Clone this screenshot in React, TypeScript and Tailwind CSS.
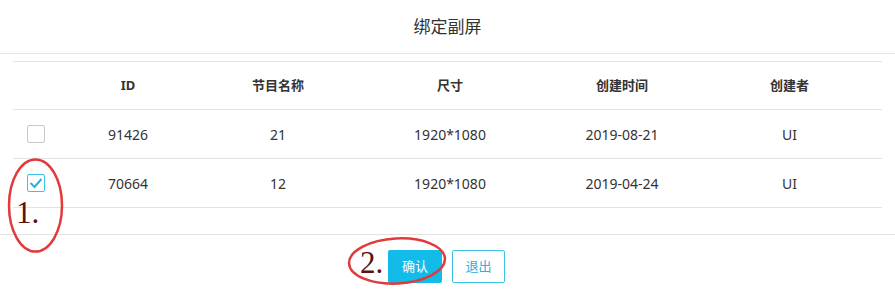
import React from 'react';

const cols = 'grid grid-cols-[42px_146px_154px_190px_154px_181px] items-center';

const rows = [
  { id: '91426', name: '21', size: '1920*1080', date: '2019-08-21', author: 'UI', checked: false },
  { id: '70664', name: '12', size: '1920*1080', date: '2019-04-24', author: 'UI', checked: true },
];

function Check({ on }: { on: boolean }) {
  if (!on) {
    return <div className="w-[18px] h-[18px] rounded-[2px] border border-[#c9c9c9] bg-white" />;
  }
  return (
    <div className="w-[18px] h-[18px] rounded-[2px] border border-[#3cc3e6] bg-white flex items-center justify-center">
      <svg width="14" height="12" viewBox="0 0 14 12">
        <path d="M1.5 6 L5.5 10 L12.5 2" fill="none" stroke="#21b4e0" strokeWidth="2" />
      </svg>
    </div>
  );
}

export default function App() {
  return (
    <div
      className="relative w-[895px] h-[298px] bg-white text-[#333] overflow-hidden"
      style={{ fontFamily: '"Noto Sans", "Noto Sans CJK SC", sans-serif' }}
    >
      <div className="h-[54px] flex items-center justify-center border-b border-[#e6e6e6] text-[17px]">
        绑定副屏
      </div>

      <div className="px-[13px] pt-[7px]">
        <div className="border-t border-[#e3e3e3]">
          <div className={`${cols} h-[48px] border-b border-[#e3e3e3] text-[13px] font-bold text-center`}>
            <div />
            <div>ID</div>
            <div>节目名称</div>
            <div>尺寸</div>
            <div>创建时间</div>
            <div>创建者</div>
          </div>
          {rows.map((r) => (
            <div key={r.id} className={`${cols} h-[49px] border-b border-[#e3e3e3] text-[14px] text-center`}>
              <div className="pl-[14px]">
                <Check on={r.checked} />
              </div>
              <div>{r.id}</div>
              <div>{r.name}</div>
              <div>{r.size}</div>
              <div>{r.date}</div>
              <div>{r.author}</div>
            </div>
          ))}
        </div>
      </div>

      <div className="mt-[26px] border-t border-[#e3e3e3] flex justify-center gap-[10px] pt-[15px] pr-[2px]">
        <button className="w-[54px] h-[33px] rounded-[2px] bg-[#13bbe9] text-white text-[13px]">确认</button>
        <button className="w-[53px] h-[33px] rounded-[2px] border border-[#3cc3e6] bg-white text-[#23b3de] text-[13px]">
          退出
        </button>
      </div>

      {/* hand-drawn annotations */}
      <svg className="absolute left-0 top-0 pointer-events-none" width="895" height="298">
        <ellipse cx="35.5" cy="205.5" rx="26.5" ry="46" fill="none" stroke="#e23a3a" strokeWidth="2.5" />
        <ellipse cx="397" cy="261" rx="48" ry="22.5" fill="none" stroke="#e23a3a" strokeWidth="2.5" transform="rotate(-3 397 261)" />
      </svg>
      <div
        className="absolute left-[16px] top-[197px] text-[31px] leading-none text-[#5a1212]"
        style={{ fontFamily: '"Liberation Serif", serif' }}
      >
        1.
      </div>
      <div
        className="absolute left-[360px] top-[247px] text-[31px] leading-none text-[#5a1212]"
        style={{ fontFamily: '"Liberation Serif", serif' }}
      >
        2.
      </div>
    </div>
  );
}
